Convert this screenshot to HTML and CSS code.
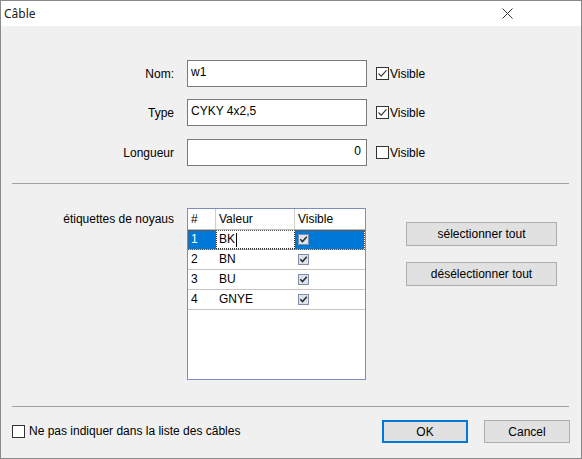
FILE: index.html
```html
<!DOCTYPE html>
<html lang="fr">
<head>
<meta charset="utf-8">
<title>Câble</title>
<link rel="stylesheet" href="styles.css">
</head>
<body>
<div class="window">
  <div class="titlebar">
    <span class="title">Câble</span>
    <svg class="close" width="11" height="11" viewBox="0 0 11 11"><path d="M0.5 0.5 L10.5 10.5 M10.5 0.5 L0.5 10.5" stroke="#333" stroke-width="1" fill="none"/></svg>
  </div>
  <div class="body">
    <div class="form">
      <div class="row">
        <span class="lbl">Nom:</span>
        <div class="input">w1</div>
        <span class="vis"><svg class="cb" width="13" height="13" viewBox="0 0 13 13"><rect x="0.5" y="0.5" width="12" height="12" fill="#fff" stroke="#333"/><path d="M2.5 6.5 L5.2 9.2 L10.5 3.3" stroke="#333" stroke-width="1.1" fill="none"/></svg>Visible</span>
      </div>
      <div class="row">
        <span class="lbl">Type</span>
        <div class="input">CYKY 4x2,5</div>
        <span class="vis"><svg class="cb" width="13" height="13" viewBox="0 0 13 13"><rect x="0.5" y="0.5" width="12" height="12" fill="#fff" stroke="#333"/><path d="M2.5 6.5 L5.2 9.2 L10.5 3.3" stroke="#333" stroke-width="1.1" fill="none"/></svg>Visible</span>
      </div>
      <div class="row row-last">
        <span class="lbl">Longueur</span>
        <div class="input num">0</div>
        <span class="vis"><svg class="cb" width="13" height="13" viewBox="0 0 13 13"><rect x="0.5" y="0.5" width="12" height="12" fill="#fff" stroke="#333"/></svg>Visible</span>
      </div>
    </div>
    <div class="sep sep-top"></div>
    <div class="cores">
      <span class="lbl lbl-cores">étiquettes de noyaus</span>
      <div class="grid">
        <div class="grow head">
          <div class="hc">#</div>
          <div class="hc">Valeur</div>
          <div class="hc last">Visible</div>
        </div>
        <div class="grow sel">
          <div class="c blue">1</div>
          <div class="c edit">BK<span class="caret"></span></div>
          <div class="c blue"><svg class="gcb" width="11" height="11" viewBox="0 0 11 11"><rect x="0.5" y="0.5" width="10" height="10" fill="#dde3ec" stroke="#8190a8"/><path d="M2.3 5.3 L4.5 7.6 L8.8 2.8" stroke="#2b2b2b" stroke-width="1.5" fill="none"/></svg></div>
        </div>
        <div class="grow">
          <div class="c">2</div>
          <div class="c">BN</div>
          <div class="c"><svg class="gcb" width="11" height="11" viewBox="0 0 11 11"><rect x="0.5" y="0.5" width="10" height="10" fill="#dde3ec" stroke="#8190a8"/><path d="M2.3 5.3 L4.5 7.6 L8.8 2.8" stroke="#2b2b2b" stroke-width="1.5" fill="none"/></svg></div>
        </div>
        <div class="grow">
          <div class="c">3</div>
          <div class="c">BU</div>
          <div class="c"><svg class="gcb" width="11" height="11" viewBox="0 0 11 11"><rect x="0.5" y="0.5" width="10" height="10" fill="#dde3ec" stroke="#8190a8"/><path d="M2.3 5.3 L4.5 7.6 L8.8 2.8" stroke="#2b2b2b" stroke-width="1.5" fill="none"/></svg></div>
        </div>
        <div class="grow">
          <div class="c">4</div>
          <div class="c">GNYE</div>
          <div class="c"><svg class="gcb" width="11" height="11" viewBox="0 0 11 11"><rect x="0.5" y="0.5" width="10" height="10" fill="#dde3ec" stroke="#8190a8"/><path d="M2.3 5.3 L4.5 7.6 L8.8 2.8" stroke="#2b2b2b" stroke-width="1.5" fill="none"/></svg></div>
        </div>
      </div>
      <div class="side">
        <button class="btn wide">sélectionner tout</button>
        <button class="btn wide">désélectionner tout</button>
      </div>
    </div>
    <div class="sep sep-bottom"></div>
    <div class="footer">
      <span class="vis foot-cb"><svg class="cb" width="13" height="13" viewBox="0 0 13 13"><rect x="0.5" y="0.5" width="12" height="12" fill="#fff" stroke="#333"/></svg>Ne pas indiquer dans la liste des câbles</span>
      <div class="actions">
        <button class="btn small ok">OK</button>
        <button class="btn small">Cancel</button>
      </div>
    </div>
  </div>
</div>
</body>
</html>
```
FILE: styles.css
```css
* { box-sizing: border-box; }
html, body { margin: 0; padding: 0; }
body {
  font-family: "Liberation Sans", Arial, sans-serif;
  font-size: 12px;
  color: #000;
  background: #f0f0f0;
}
.window {
  width: 582px;
  height: 459px;
  border: 1px solid #8a8a8a;
  background: #f0f0f0;
  display: flex;
  flex-direction: column;
}
.titlebar {
  height: 25px;
  background: #fff;
  display: flex;
  align-items: center;
  justify-content: space-between;
  padding: 0 68px 0 3px;
  flex: none;
}
.title {
  font-family: "Noto Sans", "Open Sans", sans-serif;
  font-size: 12px;
  color: #222;
}
.close { display: block; }
.body { display: flex; flex-direction: column; }
.form {
  padding-top: 34px;
  display: flex;
  flex-direction: column;
  gap: 12px;
}
.row { display: flex; align-items: center; height: 27px; }
.row-last { margin-top: 1px; }
.lbl {
  width: 173px;
  margin-right: 13px;
  text-align: right;
  flex: none;
}
.input {
  width: 180px;
  height: 27px;
  border: 1px solid #7a7a7a;
  background: #fff;
  padding: 4px 3px 0;
  line-height: 14px;
  flex: none;
}
.input.num { text-align: right; padding-right: 5px; }
.vis { display: flex; align-items: center; margin-left: 9px; }
.cb { display: block; margin-right: 1px; flex: none; }
.sep { height: 1px; background: #a0a0a0; margin: 0 12px 0 11px; }
.sep-top { margin-top: 17px; }
.sep-bottom { margin-top: 26px; }
.cores { display: flex; align-items: flex-start; margin-top: 24px; }
.lbl-cores { padding-top: 4px; }
.grid {
  width: 179px;
  height: 172px;
  border: 1px solid #7c8dc4;
  background: #fff;
  flex: none;
}
.grow {
  display: grid;
  grid-template-columns: 28px 79px 69px;
  height: 20px;
  border-bottom: 1px solid #c4c4c4;
}
.grow.head { height: 21px; border-bottom: 1px solid #b9b9b9; }
.hc {
  border-right: 1px solid #cfcfcf;
  padding-left: 3px;
  line-height: 20px;
  background: #fff;
}
.hc.last { border-right: 0; }
.c {
  padding-left: 3px;
  line-height: 19px;
  display: flex;
  align-items: center;
}
.grow.sel { outline: 1px dotted #555; outline-offset: -1px; }
.c.blue { background: #0078d7; color: #fff; }
.c.edit {
  background: #fff;
  outline: 1px dotted #333;
  outline-offset: -1px;
}
.caret { display: inline-block; width: 1px; height: 14px; background: #000; margin-left: 1px; }
.gcb { display: block; }
.side {
  margin-left: 40px;
  margin-top: 14px;
  display: flex;
  flex-direction: column;
  gap: 16px;
}
.btn {
  font-family: "Liberation Sans", Arial, sans-serif;
  font-size: 12px;
  color: #000;
  background: #e1e1e1;
  border: 1px solid #adadad;
  padding: 0;
  margin: 0;
}
.btn.wide { width: 151px; height: 24px; }
.btn.small { width: 86px; height: 23px; }
.btn.ok { border: 2px solid #0078d7; }
.footer {
  margin-top: 13px;
  display: flex;
  align-items: center;
  justify-content: space-between;
  padding: 0 11px 0 11px;
}
.foot-cb { margin-left: 0; margin-top: -1px; }
.foot-cb .cb { margin-right: 4px; }
.actions { display: flex; gap: 16px; }
```
